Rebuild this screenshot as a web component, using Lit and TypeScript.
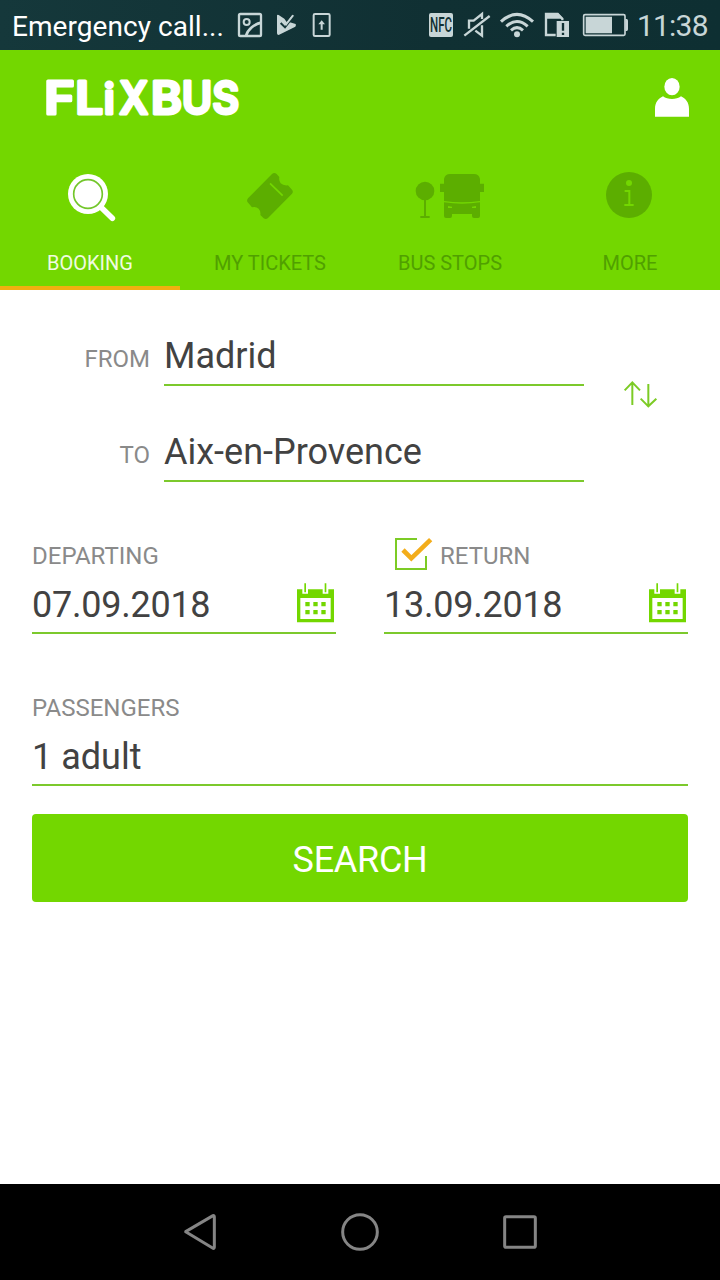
import { LitElement, html, css, svg } from "lit";
import { customElement, property } from "lit/decorators.js";

const calendarIcon = html`
  <svg width="40" height="42" viewBox="0 0 120 126">
    <path fill="#73d700" d="M3 22H114V121H3Z" />
    <path fill="#fff" d="M13 48H104V111H13ZM19 4H36V35H19ZM80 4H97V35H80Z" />
    <path fill="#73d700" d="M25 4H30V31H25ZM86 4H91V31H86Z" />
    <path fill="#73d700" d="M28 60h13v13h-13ZM52 60h13v13h-13ZM76 60h13v13h-13ZM28 84h13v13h-13ZM52 84h13v13h-13ZM76 84h13v13h-13Z" />
  </svg>`;

@customElement("status-bar")
export class StatusBar extends LitElement {
  static styles = css`
    :host { display: flex; height: 50px; background: linear-gradient(90deg, #15383b, #103033 60%, #0e2f32); position: relative; justify-content: space-between; font: 28px/50px Roboto, sans-serif; }
    .side { display: flex; }
    .carrier { width: 226px; padding-left: 12px; box-sizing: border-box; color: #fff; padding-top: 2px; white-space: nowrap; letter-spacing: 0.05px; }
    .time { width: 83px; color: #c8d6d7; padding-top: 2px; box-sizing: border-box; font-size: 30px; line-height: 48px; letter-spacing: -0.8px; }
    svg { display: block; margin-right: -1px; }
  `;
  render() {
    return html`
      <div class="side">
        <div class="carrier">Emergency call...</div>
        <svg width="120" height="50" viewBox="678 0 360 150" fill="none" stroke="#c8d6d7" stroke-width="6">
          <rect x="717" y="42" width="66" height="66" rx="4" stroke-width="7" />
          <circle cx="740" cy="66" r="9" stroke-width="6" />
          <path d="M738 108C743 88 764 72 784 68" stroke-width="8" />
          <path fill="#c8d6d7" stroke="none" d="M831 46Q832 43 836 45L853 56L860 66L877 44L882 48L867 66L887 72Q889 76 886 80L836 105Q831 105 831 100Z" />
          <path stroke="#143639" stroke-width="6" d="M842 69L855 82L884 45" />
          <path stroke-width="5" d="M853 69L858 74L880 46" />
          <rect x="941" y="42" width="48" height="66" rx="4" stroke-width="6" />
          <path fill="#c8d6d7" stroke="none" d="M965 61L975 73H968V89H962V73H955Z" />
        </svg>
      </div>
      <div class="side">
        <svg width="236" height="50" viewBox="6 0 708 150" fill="none" stroke="#c8d6d7" stroke-width="7">
          <rect x="87" y="39" width="72" height="72" rx="6" fill="#c8d6d7" stroke="none" />
          <text x="90" y="95" font-family="Roboto" font-size="58" font-weight="500" textLength="66" lengthAdjust="spacingAndGlyphs" fill="#103033" stroke="none">NFC</text>
          <path d="M207 86V62H221L246 42V57M246 76V107L226 92M193 107L269 48" />
          <path d="M303 65Q351 21 399 65M319 79Q351 50 383 79" stroke-width="9" />
          <path d="M333 91Q351 75 369 91" stroke-width="9" />
          <circle cx="351" cy="103" r="9" fill="#c8d6d7" stroke="none" />
          <path d="M467 105H438V42H473L487 56V61" />
          <path fill="#c8d6d7" stroke="none" d="M438 39H474L490 56H438ZM470 63H507V111H470Z" />
          <path stroke="#103033" d="M489 69V92M489 98V105" />
          <rect x="551" y="44" width="124" height="62" rx="4" stroke-width="5" />
          <path fill="#c8d6d7" stroke="none" d="M557 50H636V100H557ZM676 57H680Q684 57 684 62V88Q684 93 680 93H676Z" />
        </svg>
        <div class="time">11:38</div>
      </div>`;
  }
}

@customElement("nav-tab")
export class NavTab extends LitElement {
  @property() label = "";
  @property({ type: Boolean, reflect: true }) active = false;
  @property({ attribute: false }) icon: unknown;
  @property({ type: Number }) offset = 0;
  static styles = css`
    :host { display: flex; flex-direction: column; align-items: center; width: 180px; height: 140px; padding-top: 10px; box-sizing: border-box; border-bottom: 4px solid transparent; color: #50a000; font: 20px/24px Roboto, sans-serif; background-clip: padding-box; }
    :host([active]) { color: #f0fbe0; border-bottom-color: #f2b010; }
    .icon { display: block; width: 180px; height: 80px; }
    .label { margin-top: 11px; white-space: nowrap; }
  `;
  render() {
    return html`<svg class="icon" viewBox="${this.offset} 0 540 240">${this.icon}</svg>
      <span class="label">${this.label}</span>`;
  }
}

@customElement("app-root")
export class AppRoot extends LitElement {
  static styles = css`
    :host { display: flex; flex-direction: column; width: 720px; height: 1280px; background: #fff; font-family: Roboto, sans-serif; color: #424242; overflow: hidden; }
    svg { display: block; }
    .header { background: #73d700; height: 240px; }
    .brand { height: 100px; display: flex; justify-content: space-between; }
    .tabs { display: flex; }
    .form { flex: 1; display: flex; flex-direction: column; }
    .route { display: flex; }
    .places { width: 584px; }
    .place { height: 96px; display: grid; grid-template-columns: 150px 420px; column-gap: 14px; align-items: end; }
    .label { font-size: 24px; line-height: 28px; color: #8a8a8a; }
    .place .label { text-align: right; padding-bottom: 13px; }
    .value { font-size: 36px; line-height: 42px; padding-bottom: 7px; border-bottom: 2px solid #7cc92c; white-space: nowrap; }
    .dates { display: grid; grid-template-columns: 304px 304px; column-gap: 48px; padding: 53px 32px 0; }
    .caption { height: 40px; display: flex; align-items: center; }
    .caption .label { padding-top: 2px; }
    .box { margin: 0 5px 0 8px; }
    .date { display: flex; justify-content: space-between; margin-top: 9px; padding-bottom: 6px; }
    .date svg { margin: -2px 0 0; }
    .date span { height: 42px; letter-spacing: -0.25px; }
    .people { padding: 60px 32px 0; }
    .people .value { margin-top: 14px; padding-bottom: 6px; }
    .search { margin: 28px 32px 0; height: 88px; box-sizing: border-box; border: 0; border-radius: 4px; background: #73d700; color: #fff; font: 36px/42px Roboto, sans-serif; letter-spacing: -0.3px; padding: 3px 0 0; }
    .nav { height: 96px; background: #000; }
  `;

  render() {
    const magnifier = svg`<circle cx="264" cy="102" r="60" fill="#fff"/><circle cx="264" cy="102" r="43" fill="none" stroke="#73c62b" stroke-width="5"/><path d="M303 142L337 175" stroke="#fff" stroke-width="17" stroke-linecap="round"/>`;
    const ticket = svg`<path fill="#5cae00" d="M816 42Q823 36 830 42L838 51Q836 62 842 70Q850 78 864 76L876 89Q881 95 876 101L804 174Q798 180 791 175L781 165Q783 154 776 146Q768 139 756 142L743 127Q739 122 744 115Z"/><path d="M810 70L848 107" stroke="#73d700" stroke-width="5"/>`;
    const stop = svg`<g fill="#5cae00"><circle cx="195" cy="93" r="28"/><path d="M192 118H198V168H209V174H181V168H192Z"/><path d="M270 42H342Q357 42 360 57V71H372V96H360V123Q306 131 252 123V96H240V71H252V57Q255 42 270 42Z"/><path fill-rule="evenodd" d="M252 127Q306 135 360 127V168Q360 174 354 174H342Q336 174 336 168V162H276V168Q276 174 270 174H258Q252 174 252 168ZM264 138V144H276V140ZM348 138V144H336V140Z"/></g>`;
    const info = svg`<circle cx="267" cy="105" r="69" fill="#5cae00"/><circle cx="267" cy="69" r="9" fill="#73d700"/><path d="M254 93H268V135M253 135H281" fill="none" stroke="#73d700" stroke-width="6"/>`;
    return html`
      <status-bar></status-bar>
      <div class="header">
        <div class="brand">
          <svg width="260" height="100" viewBox="0 50 260 100" fill="#fff" stroke="#fff" stroke-width="3" stroke-linejoin="round" font-family="Inter, sans-serif" font-weight="600" font-size="44.5">
            <text y="114" x="44.2" textLength="30.5" lengthAdjust="spacingAndGlyphs">F</text>
            <text y="114" x="75.2" textLength="28" lengthAdjust="spacingAndGlyphs">L</text>
            <text y="114" x="103.8" font-size="42">i</text>
            <text y="114" x="119.3" textLength="29" lengthAdjust="spacingAndGlyphs">X</text>
            <text y="114" x="151" textLength="31" lengthAdjust="spacingAndGlyphs">B</text>
            <text y="114" x="181.8" textLength="30.5" lengthAdjust="spacingAndGlyphs">U</text>
            <text y="114" x="212.3" textLength="27" lengthAdjust="spacingAndGlyphs">S</text>
          </svg>
          <svg width="80" height="100" viewBox="0 -45 240 300" fill="#fff">
            <ellipse cx="96" cy="65" rx="23" ry="26" />
            <path d="M45 155V132C45 112 55 101 69 94C83 105 109 105 123 94C137 101 147 112 147 132V155Z" />
          </svg>
        </div>
        <div class="tabs">
          <nav-tab active label="BOOKING" .icon=${magnifier} .offset=${0}></nav-tab>
          <nav-tab label="MY TICKETS" .icon=${ticket} .offset=${540}></nav-tab>
          <nav-tab label="BUS STOPS" .icon=${stop} .offset=${0}></nav-tab>
          <nav-tab label="MORE" .icon=${info} .offset=${0}></nav-tab>
        </div>
      </div>
      <div class="form">
        <div class="route">
          <div class="places">
            <div class="place"><span class="label">FROM</span><div class="value">Madrid</div></div>
            <div class="place"><span class="label">TO</span><div class="value">Aix-en-Provence</div></div>
          </div>
          <svg width="136" height="192" viewBox="-48 -225 408 576" fill="none" stroke="#7ccb25" stroke-width="6">
            <path d="M97 120V52M74 76L97 52L120 76M145 57V124M122 101L145 124L169 101" />
          </svg>
        </div>
        <div class="dates">
          <div>
            <div class="caption"><span class="label">DEPARTING</span></div>
            <div class="value date"><span>07.09.2018</span>${calendarIcon}</div>
          </div>
          <div>
            <div class="caption">
              <svg class="box" width="43" height="40" viewBox="336 30 129 120" fill="none">
                <path d="M411 42H348V132H438V93" stroke="#7ccb25" stroke-width="6" />
                <path d="M369 75L394 100L452 44" stroke="#f3ad1b" stroke-width="14" />
              </svg>
              <span class="label">RETURN</span>
            </div>
            <div class="value date"><span>13.09.2018</span>${calendarIcon}</div>
          </div>
        </div>
        <div class="people">
          <div class="label">PASSENGERS</div>
          <div class="value">1 adult</div>
        </div>
        <button class="search">SEARCH</button>
      </div>
      <div class="nav">
        <svg width="720" height="96" viewBox="-450 12 2160 288" fill="none" stroke="#858585" stroke-width="9" stroke-linejoin="round">
          <path d="M107 155L189 107Q193 106 193 111V201Q193 206 189 205Z" />
          <circle cx="630" cy="156" r="52" />
          <rect x="1064" y="110" width="92" height="92" rx="4" />
        </svg>
      </div>`;
  }
}
